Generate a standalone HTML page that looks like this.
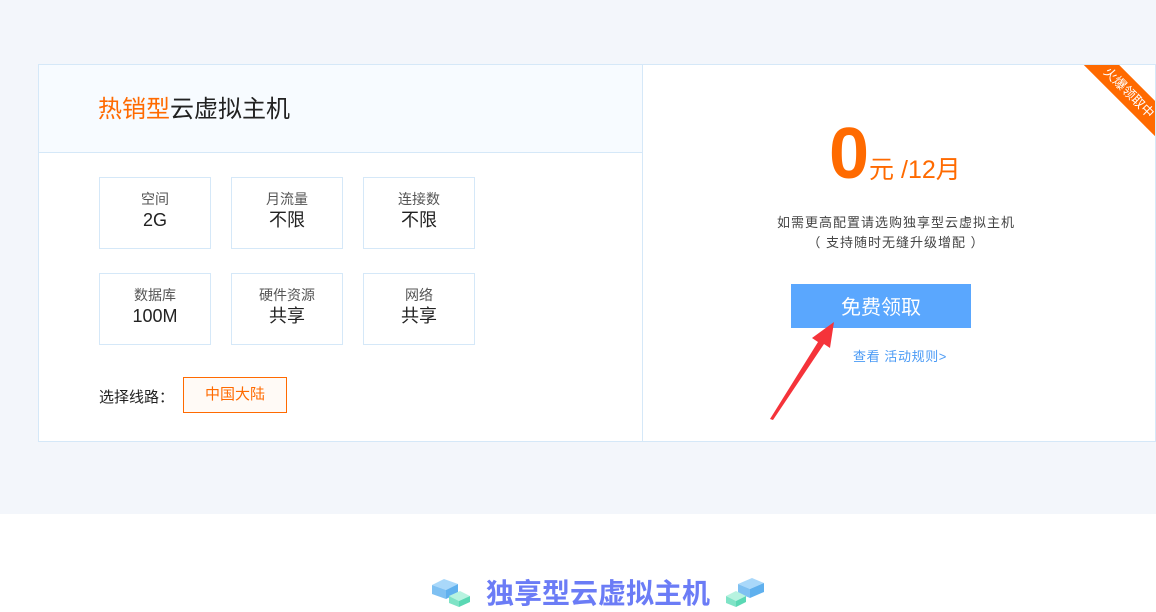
<!DOCTYPE html>
<html><head><meta charset="utf-8"><style>
*{margin:0;padding:0;box-sizing:border-box}
body{width:1156px;height:608px;overflow:hidden;background:#fff;font-family:"Liberation Sans","Noto Sans CJK SC",sans-serif;position:relative}
.top{position:absolute;left:0;top:0;width:1156px;height:514px;background:#f3f6fb}
.card{position:absolute;left:38px;top:64px;width:1118px;height:378px;background:#fff;border:1px solid #d5e8f8;overflow:hidden}
.left{position:absolute;left:0;top:0;width:604px;height:376px;border-right:1px solid #d5e8f8}
.hd{height:88px;background:#f7fbff;border-bottom:1px solid #d5e8f8;font-size:24px;line-height:90px;padding-left:59px;color:#222}
.hd span{color:#ff6a00}
.box{position:absolute;width:112px;height:72px;border:1px solid #d5e8f8;text-align:center}
.box .a{font-size:14px;color:#555;margin-top:12px;line-height:18px}
.box .b{font-size:18px;color:#222;line-height:24px}
.sel{position:absolute;left:60px;top:321px;font-size:15px;color:#222}
.btn1{position:absolute;left:144px;top:312px;width:104px;height:36px;border:1px solid #ff6a00;color:#ff6a00;font-size:15px;text-align:center;line-height:34px;background:#fffaf6}
.price{position:absolute;left:790px;top:48px;color:#ff6a00}
.price b{font-size:72px;font-weight:bold}
.price i{font-style:normal;font-size:25px}
.desc{position:absolute;left:600px;width:514px;top:148px;text-align:center;font-size:13px;letter-spacing:1px;color:#444;line-height:20px}
.get{position:absolute;left:752px;top:219px;width:180px;height:44px;background:#5aa7fe;color:#fff;font-size:20px;text-align:center;line-height:48px}
.rule{position:absolute;left:604px;width:514px;top:281px;text-align:center;font-size:13px;letter-spacing:0.6px;color:#4a9af5}
.rib{position:absolute;left:1000px;top:15px;width:180px;height:25px;background:#ff6a00;color:#fff;font-size:13px;text-align:center;line-height:25px;transform:rotate(45deg)}
.title{position:absolute;left:486px;top:572px;font-size:28px;font-weight:bold;color:#6b7cf6;white-space:nowrap}
</style></head><body>
<div class="top"></div>
<div class="card">
 <div class="left">
  <div class="hd"><span>热销型</span>云虚拟主机</div>
  <div class="box" style="left:60px;top:112px"><div class="a">空间</div><div class="b">2G</div></div>
  <div class="box" style="left:192px;top:112px"><div class="a">月流量</div><div class="b">不限</div></div>
  <div class="box" style="left:324px;top:112px"><div class="a">连接数</div><div class="b">不限</div></div>
  <div class="box" style="left:60px;top:208px"><div class="a">数据库</div><div class="b">100M</div></div>
  <div class="box" style="left:192px;top:208px"><div class="a">硬件资源</div><div class="b">共享</div></div>
  <div class="box" style="left:324px;top:208px"><div class="a">网络</div><div class="b">共享</div></div>
  <div class="sel">选择线路：</div>
  <div class="btn1">中国大陆</div>
 </div>
 <div class="price"><b>0</b><i>元 /12月</i></div>
 <div class="desc">如需更高配置请选购独享型云虚拟主机<br>（ 支持随时无缝升级增配 ）</div>
 <div class="get">免费领取</div>
 <div class="rule">查看 活动规则&gt;</div>
 <div class="rib">火爆领取中</div>
</div>
<svg style="position:absolute;left:0;top:0" width="1156" height="608">
 <polygon points="770,419 818,342 812,338 834,322 830,348 824,344 773,420" fill="#f5333a"/>
 <g>
  <polygon points="432,585 444,579 458,584 446,590" fill="#a9d8fa"/><polygon points="432,585 446,590 446,599 432,594" fill="#7ec0f2"/><polygon points="446,590 458,584 458,593 446,599" fill="#5fb0ee"/>
  <polygon points="449,596 460,591 470,596 459,601" fill="#b7f3e0"/><polygon points="449,596 459,601 459,607 449,603" fill="#7fe3c6"/><polygon points="459,601 470,596 470,602 459,607" fill="#5ad8b4"/>
  <polygon points="738,584 752,578 764,583 750,589" fill="#a9d8fa"/><polygon points="738,584 750,589 750,598 738,593" fill="#7ec0f2"/><polygon points="750,589 764,583 764,592 750,598" fill="#5fb0ee"/>
  <polygon points="726,596 736,591 746,596 736,601" fill="#b7f3e0"/><polygon points="726,596 736,601 736,607 726,603" fill="#7fe3c6"/><polygon points="736,601 746,596 746,602 736,607" fill="#5ad8b4"/>
 </g>
</svg>
<div class="title">独享型云虚拟主机</div>
</body></html>
